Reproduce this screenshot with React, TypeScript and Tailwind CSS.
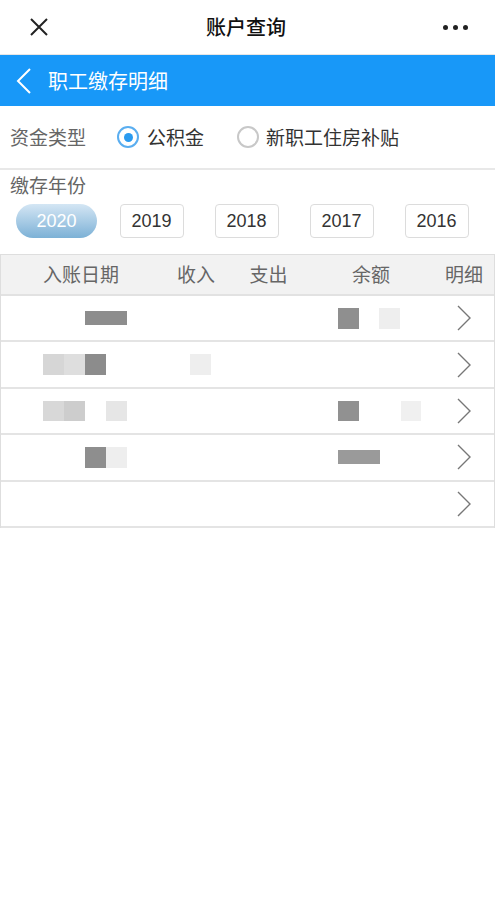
const font = { fontFamily: '"Noto Sans CJK SC", "Noto Sans", sans-serif' };

const years = ["2020", "2019", "2018", "2017", "2016"];

const Chevron = () => (
  <svg width="16" height="28" viewBox="0 0 16 28" fill="none">
    <path d="M2 2 L14 14 L2 26" stroke="#777" strokeWidth="1.4" />
  </svg>
);

type Block = { w: number; h: number; c: string; ml: number };

const rows: { date: Block[]; income: Block[]; bal: Block[] }[] = [
  {
    date: [{ w: 42, h: 14, c: "#8d8d8d", ml: 84 }],
    income: [],
    bal: [
      { w: 21, h: 21, c: "#8f8f8f", ml: 32 },
      { w: 21, h: 21, c: "#eeeeee", ml: 20 },
    ],
  },
  {
    date: [
      { w: 21, h: 21, c: "#d6d6d6", ml: 42 },
      { w: 21, h: 21, c: "#dedede", ml: 0 },
      { w: 21, h: 21, c: "#8c8c8c", ml: 0 },
    ],
    income: [{ w: 21, h: 21, c: "#eeeeee", ml: 29 }],
    bal: [],
  },
  {
    date: [
      { w: 21, h: 20, c: "#d8d8d8", ml: 42 },
      { w: 21, h: 20, c: "#cdcdcd", ml: 0 },
      { w: 21, h: 20, c: "#e6e6e6", ml: 21 },
    ],
    income: [],
    bal: [
      { w: 21, h: 20, c: "#919191", ml: 32 },
      { w: 20, h: 20, c: "#f0f0f0", ml: 42 },
    ],
  },
  {
    date: [
      { w: 21, h: 21, c: "#8e8e8e", ml: 84 },
      { w: 21, h: 21, c: "#eeeeee", ml: 0 },
    ],
    income: [],
    bal: [{ w: 42, h: 14, c: "#9a9a9a", ml: 32 }],
  },
  { date: [], income: [], bal: [] },
];

const Blocks = ({ items }: { items: Block[] }) => (
  <div className="flex items-center h-full">
    {items.map((b, i) => (
      <div
        key={i}
        style={{ width: b.w, height: b.h, background: b.c, marginLeft: b.ml }}
      />
    ))}
  </div>
);

export default function App() {
  return (
    <div className="w-[495px] min-h-[919px] bg-white" style={font}>
      {/* top nav */}
      <div className="h-[55px] flex items-center justify-between px-[29px] border-b border-[#e6e6e6]">
        <svg width="20" height="20" viewBox="0 0 20 20">
          <path d="M2 2 L18 18 M18 2 L2 18" stroke="#222" strokeWidth="2" />
        </svg>
        <div className="text-[20px] text-[#111] font-medium">账户查询</div>
        <div className="flex gap-[5px] mr-[-2px]">
          <span className="w-[5px] h-[5px] rounded-full bg-[#222]" />
          <span className="w-[5px] h-[5px] rounded-full bg-[#222]" />
          <span className="w-[5px] h-[5px] rounded-full bg-[#222]" />
        </div>
      </div>

      {/* blue bar */}
      <div className="h-[51px] bg-[#1898f8] flex items-center pl-[16px] gap-[16px]">
        <svg width="16" height="26" viewBox="0 0 16 26" fill="none">
          <path d="M14 1 L2 13 L14 25" stroke="#fff" strokeWidth="2" />
        </svg>
        <div className="text-[20px] text-white">职工缴存明细</div>
      </div>

      {/* fund type */}
      <div className="h-[64px] flex items-center pl-[10px] border-b-2 border-[#e8e8e8]">
        <span className="text-[19px] text-[#666]">资金类型</span>
        <div className="ml-[31px] w-[22px] h-[22px] rounded-full border-2 border-[#5aaef0] flex items-center justify-center">
          <div className="w-[9px] h-[9px] rounded-full bg-[#2a9bf0]" />
        </div>
        <span className="ml-[8px] text-[19px] text-[#333]">公积金</span>
        <div className="ml-[33px] w-[22px] h-[22px] rounded-full border-2 border-[#c8c8c8]" />
        <span className="ml-[7px] text-[19px] text-[#333]">新职工住房补贴</span>
      </div>

      {/* year */}
      <div className="pl-[10px] pt-[2px] text-[19px] text-[#666] leading-[26px]">缴存年份</div>
      <div className="flex pl-[9px] mt-[6px] h-[34px]">
        {years.map((y, i) => (
          <div key={y} className="w-[95px] flex justify-center">
            {i === 0 ? (
              <div
                className="w-[81px] h-[34px] rounded-full bg-gradient-to-b from-[#d4e6f4] to-[#7cb1d6] text-white text-[18px] flex items-center justify-center"
                style={{ fontFamily: '"Liberation Sans", sans-serif' }}
              >
                {y}
              </div>
            ) : (
              <div
                className="w-[64px] h-[34px] rounded-[4px] border border-[#dcdcdc] text-[#333] text-[18px] flex items-center justify-center"
                style={{ fontFamily: '"Liberation Sans", sans-serif' }}
              >
                {y}
              </div>
            )}
          </div>
        ))}
      </div>

      {/* table */}
      <div className="mt-[16px] border-x border-t border-[#dedede]">
        <div className="grid grid-cols-[160px_70px_75px_130px_1fr] h-[41px] bg-[#f2f2f2] border-b-2 border-[#e2e2e2] text-[19px] text-[#666] items-center text-center">
          <span>入账日期</span>
          <span>收入</span>
          <span>支出</span>
          <span>余额</span>
          <span className="pr-[2px]">明细</span>
        </div>
        {rows.map((r, i) => (
          <div key={i} className="grid grid-cols-[160px_70px_75px_130px_1fr] h-[46.4px] border-b-2 border-[#e4e4e4]">
            <Blocks items={r.date} />
            <Blocks items={r.income} />
            <div />
            <Blocks items={r.bal} />
            <div className="flex items-center justify-center pr-[2px]">
              <Chevron />
            </div>
          </div>
        ))}
      </div>
    </div>
  );
}
